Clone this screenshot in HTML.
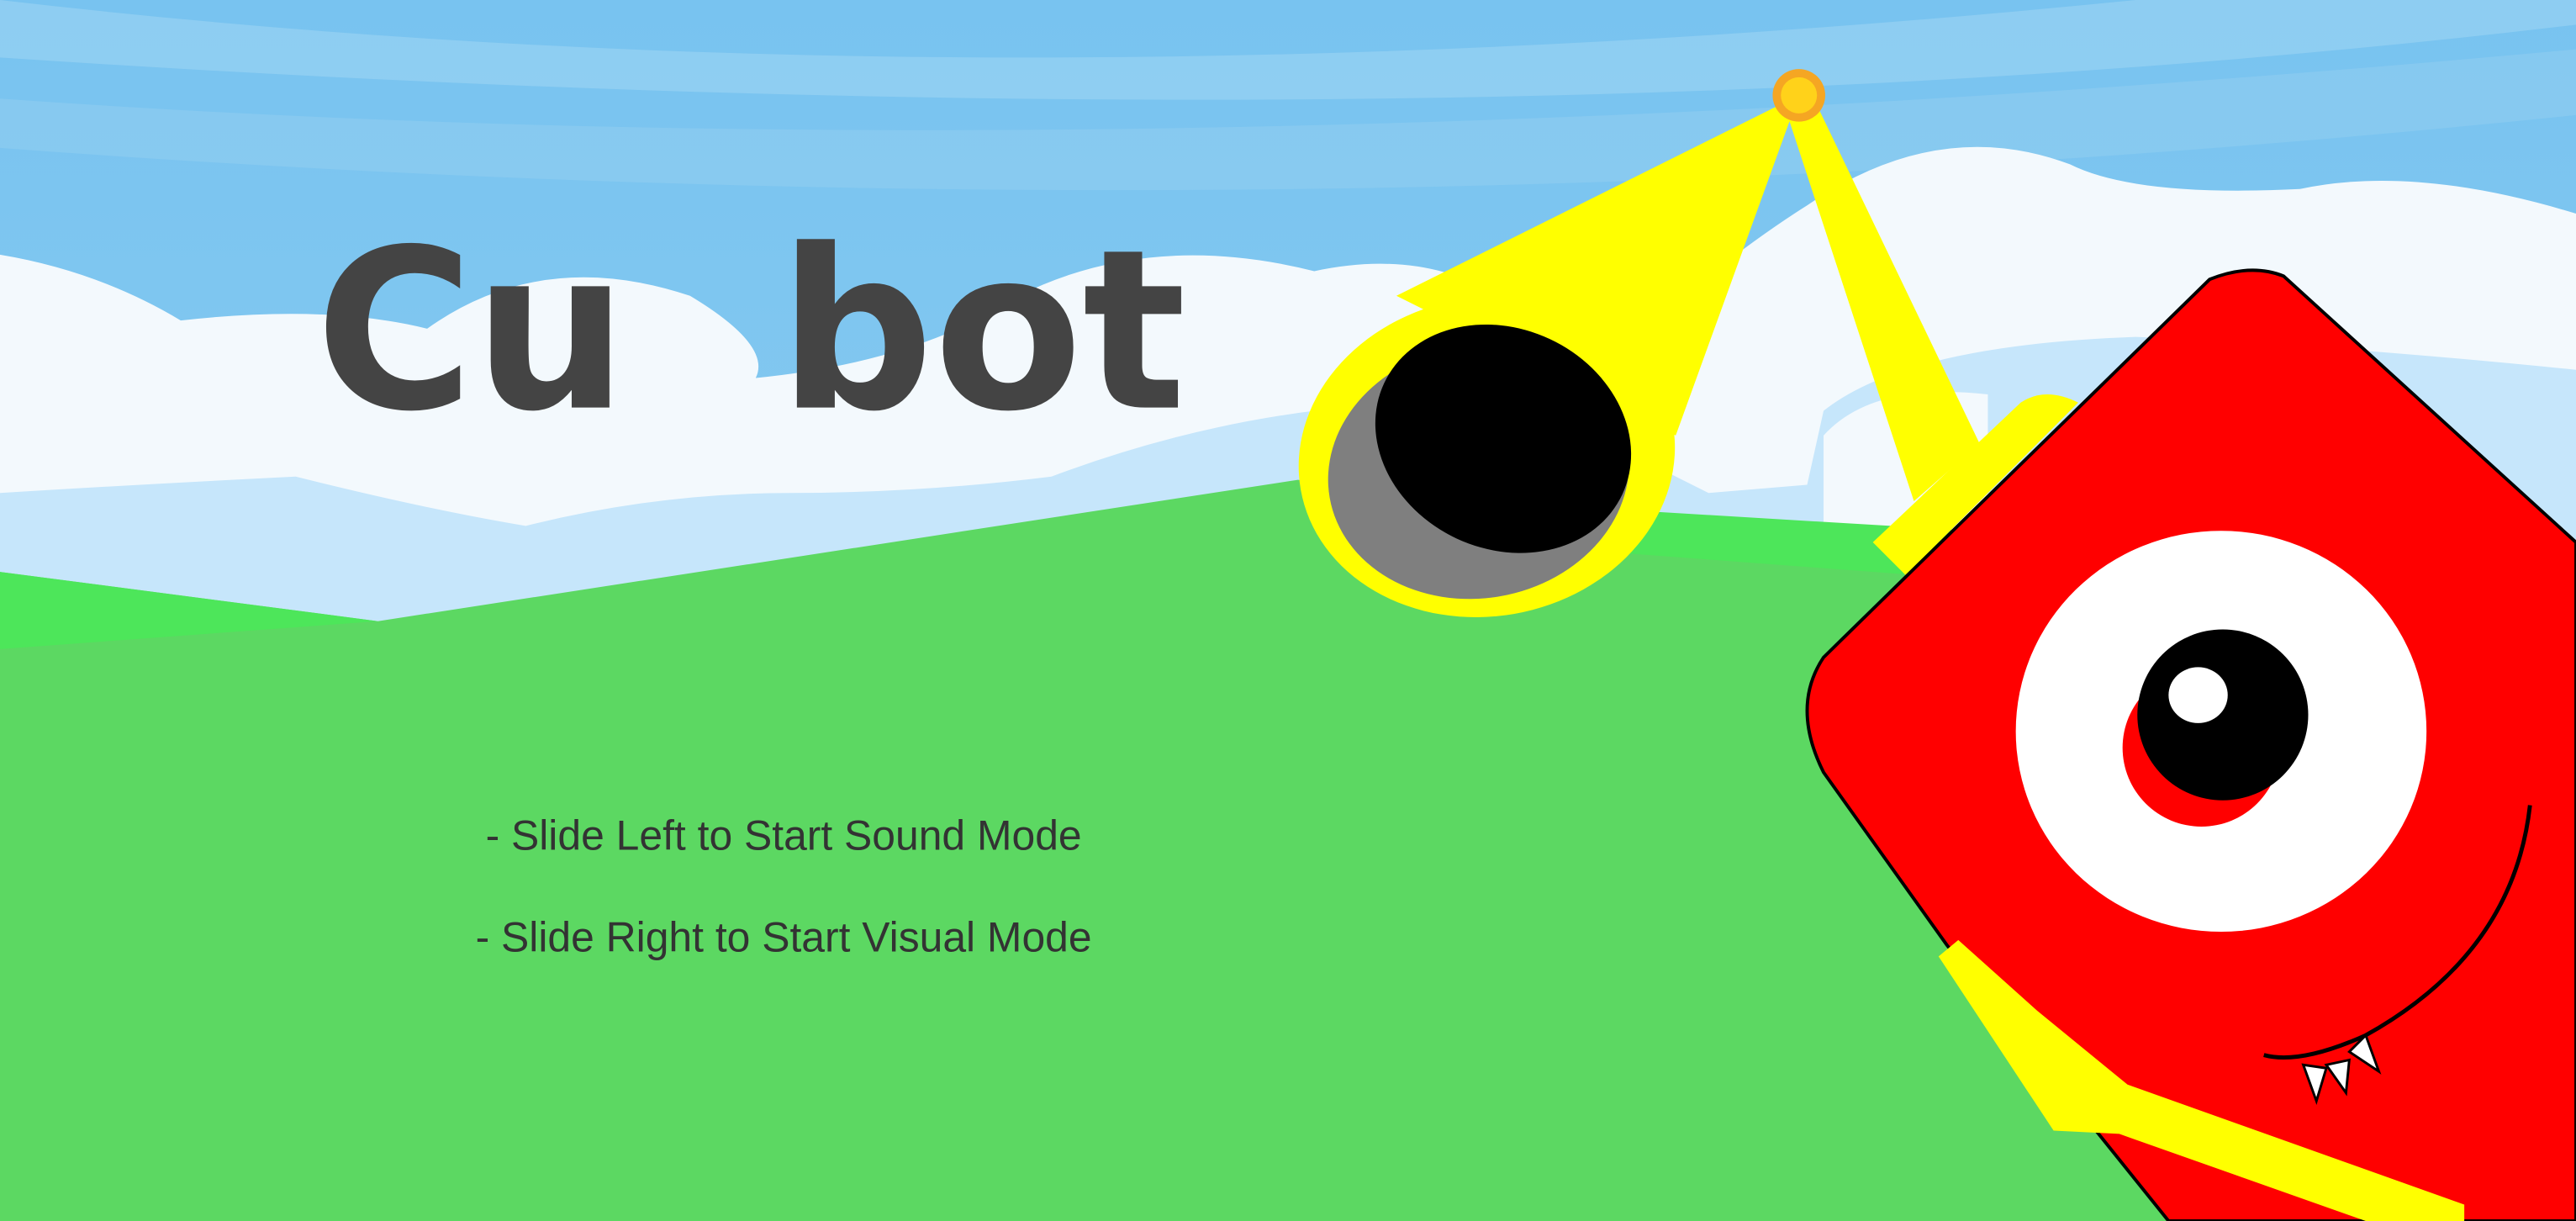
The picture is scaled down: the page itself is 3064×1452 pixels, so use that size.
<!DOCTYPE html>
<html><head><meta charset="utf-8"><style>
html,body{margin:0;padding:0;width:3064px;height:1452px;overflow:hidden;background:#8ccbee}
svg{display:block}
</style></head><body>
<svg width="3064" height="1452" viewBox="0 0 1568 743" preserveAspectRatio="none" xmlns="http://www.w3.org/2000/svg">
<defs>
<linearGradient id="sky" x1="0" y1="0" x2="0" y2="1">
<stop offset="0" stop-color="#78c3f0"/><stop offset="1" stop-color="#92cfee"/>
</linearGradient>
</defs>
<rect width="1568" height="743" fill="url(#sky)"/>
<path d="M0 0 Q600 70 1300 0 L1568 0 L1568 15 Q900 95 0 35Z" fill="#a3d7f4" opacity="0.5"/>
<path d="M0 60 Q700 110 1568 30 L1568 70 Q800 150 0 90Z" fill="#9bd3f1" opacity="0.4"/>
<!-- clouds -->
<path d="M0 155 Q60 165 110 195 Q200 185 260 200 Q330 150 420 180 Q470 210 460 230 Q560 220 620 180 Q700 140 800 165 Q870 150 920 185 L1000 200 Q1060 150 1100 125 Q1180 70 1260 100 Q1300 120 1400 115 Q1470 100 1568 130 L1568 345 L0 345Z" fill="#f3f9fd"/>
<path d="M0 300 Q80 295 180 290 Q260 310 320 320 Q400 300 480 300 Q560 300 640 290 Q720 260 800 250 L1000 280 L1040 300 L1100 295 L1110 250 Q1160 210 1300 205 Q1420 210 1568 225 L1568 420 L0 420Z" fill="#c6e6fb"/>
<path d="M1110 265 Q1140 232 1210 240 L1210 330 L1110 330Z" fill="#f3f9fd"/>
<!-- ground -->
<path d="M0 348 L230 378 L790 292 L1568 368 L1568 743 L0 743Z" fill="#5cd862"/>
<path d="M0 348 L230 378 L0 395Z" fill="#4de65a"/>
<path d="M900 305 L1568 345 L1568 380 L900 330Z" fill="#4de65a"/>
<!-- title -->
<g font-family="'DejaVu Sans','Liberation Sans',sans-serif" font-weight="bold" fill="#444">
<text x="192" y="248" font-size="135" textLength="190" lengthAdjust="spacingAndGlyphs">Cu</text>
<text x="474" y="248" font-size="135" textLength="248" lengthAdjust="spacingAndGlyphs">bot</text>
</g>
<g font-family="'Liberation Sans',sans-serif" font-size="25.5" fill="#333" text-anchor="middle">
<text x="477" y="517">- Slide Left to Start Sound Mode</text>
<text x="477" y="579">- Slide Right to Start Visual Mode</text>
</g>
<!-- telescope arms -->
<path d="M1095 58 L850 180 L1020 265Z" fill="#ffff00"/>
<path d="M1088 70 L1105 62 L1205 270 L1165 305Z" fill="#ffff00"/>
<circle cx="1095" cy="58" r="16" fill="#f5a623"/>
<circle cx="1095" cy="58" r="11" fill="#ffd21a"/>
<ellipse cx="905" cy="278" rx="115" ry="97" transform="rotate(-10 905 278)" fill="#ffff00"/>
<ellipse cx="900" cy="287" rx="92" ry="77" transform="rotate(-10 900 287)" fill="#7f7f7f"/>
<ellipse cx="915" cy="267" rx="80" ry="67" transform="rotate(25 915 267)" fill="#000"/>
<!-- robot -->
<path d="M1140 330 L1230 245 Q1245 235 1265 245 L1190 320 L1160 350Z" fill="#ffff00"/>
<path d="M1345 170 Q1370 160 1390 168 L1568 330 L1568 743 L1320 743 L1185 575 L1110 470 Q1090 430 1110 400Z" fill="#ff0000" stroke="#000" stroke-width="2"/>
<path d="M1180 582 L1192 572 L1240 615 L1295 660 L1500 733 L1500 743 L1440 743 L1290 690 L1250 688Z" fill="#ffff00"/>
<ellipse cx="1352" cy="445" rx="125" ry="122" fill="#fff"/>
<circle cx="1340" cy="455" r="48" fill="#ff0000"/>
<circle cx="1353" cy="435" r="52" fill="#000"/>
<ellipse cx="1338" cy="423" rx="18" ry="17" fill="#fff"/>
<path d="M1540 490 Q1530 580 1440 630 Q1400 648 1378 642" fill="none" stroke="#000" stroke-width="2.5"/>
<path d="M1402 648 L1410 670 L1416 650Z M1416 648 L1428 665 L1430 645Z M1430 640 L1448 652 L1440 630Z" fill="#fff" stroke="#000" stroke-width="1.5"/>
</svg>
</body></html>
